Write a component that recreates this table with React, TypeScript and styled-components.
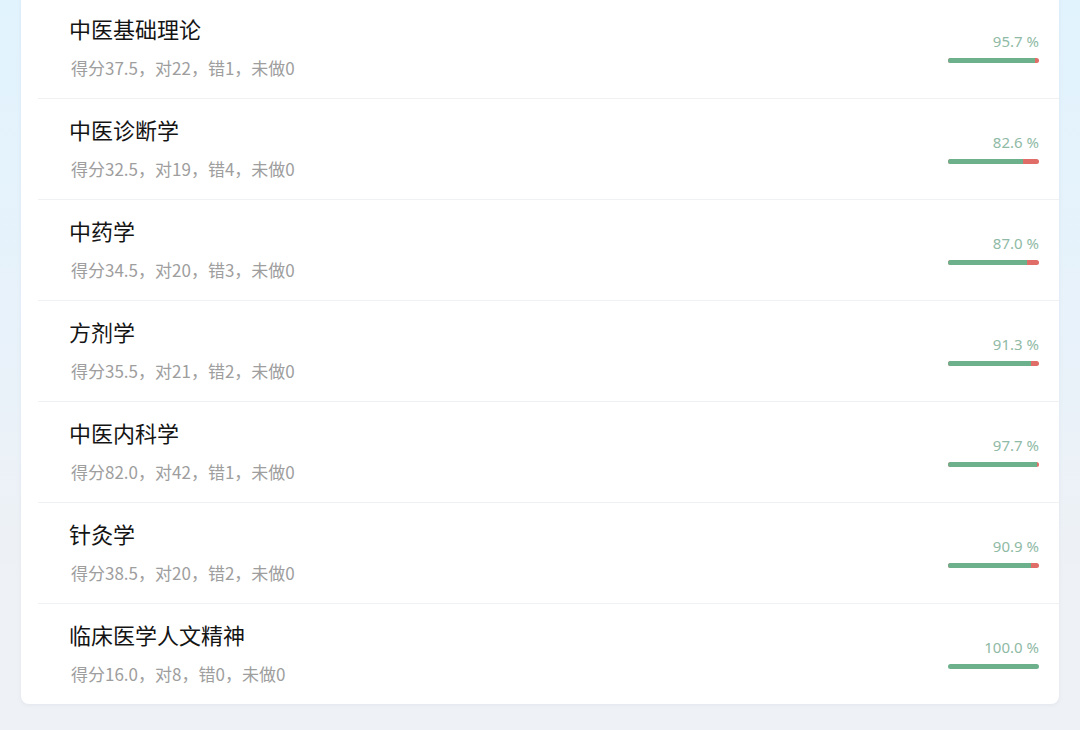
import React from "react";
import styled, { createGlobalStyle } from "styled-components";

type Subject = {
  name: string;
  score: string;
  right: number;
  wrong: number;
  undone: number;
  rate: number;
};

const subjects: Subject[] = [
  { name: "中医基础理论", score: "37.5", right: 22, wrong: 1, undone: 0, rate: 95.7 },
  { name: "中医诊断学", score: "32.5", right: 19, wrong: 4, undone: 0, rate: 82.6 },
  { name: "中药学", score: "34.5", right: 20, wrong: 3, undone: 0, rate: 87.0 },
  { name: "方剂学", score: "35.5", right: 21, wrong: 2, undone: 0, rate: 91.3 },
  { name: "中医内科学", score: "82.0", right: 42, wrong: 1, undone: 0, rate: 97.7 },
  { name: "针灸学", score: "38.5", right: 20, wrong: 2, undone: 0, rate: 90.9 },
  { name: "临床医学人文精神", score: "16.0", right: 8, wrong: 0, undone: 0, rate: 100.0 },
];

const GlobalStyle = createGlobalStyle`
  html, body {
    margin: 0;
    padding: 0;
  }
  body {
    font-family: "Noto Sans CJK SC", "Noto Sans", sans-serif;
    background: #eef1f5;
  }
`;

const Page = styled.div`
  min-height: 730px;
  overflow: hidden;
  padding: 0 21px;
  box-sizing: border-box;
  background: linear-gradient(180deg, #e1f3fd 0%, #e8f2fa 45%, #eef1f5 80%, #eef1f5 100%);
`;

const Card = styled.div`
  margin-top: -3px;
  background: #ffffff;
  border-radius: 0 0 8px 8px;
  box-shadow: 0 1px 4px rgba(160, 175, 195, 0.15);
`;

const Row = styled.div`
  display: flex;
  justify-content: space-between;
  align-items: flex-start;
  margin-left: 17px;
  padding: 0 20px 0 31px;
  border-top: 1px solid #f0f1f3;
`;

const Info = styled.div`
  display: flex;
  flex-direction: column;
  padding: 15px 0 18px;
  gap: 13px;
`;

const Title = styled.div`
  font-size: 22px;
  line-height: 30px;
  color: #141414;
`;

const Meta = styled.div`
  margin-left: 2px;
  font-size: 17px;
  line-height: 24px;
  color: #9e9e9e;
`;

const Stat = styled.div`
  display: flex;
  flex-direction: column;
  align-items: flex-end;
  margin-top: 33px;
  gap: 7px;
`;

const Percent = styled.div`
  font-family: "Noto Sans", sans-serif;
  font-size: 15px;
  line-height: 20px;
  color: #8fbaa5;
`;

const Bar = styled.div`
  display: flex;
  width: 91px;
  height: 5px;
  border-radius: 3px;
  overflow: hidden;
  background: #e06d68;
`;

const Fill = styled.div`
  height: 100%;
  background: #6db18c;
`;

export default function App() {
  return (
    <>
      <GlobalStyle />
      <Page>
        <Card>
          {subjects.map((s) => (
            <Row key={s.name}>
              <Info>
                <Title>{s.name}</Title>
                <Meta>
                  得分{s.score}，对{s.right}，错{s.wrong}，未做{s.undone}
                </Meta>
              </Info>
              <Stat>
                <Percent>{s.rate.toFixed(1)} %</Percent>
                <Bar>
                  <Fill style={{ width: `${s.rate}%` }} />
                </Bar>
              </Stat>
            </Row>
          ))}
        </Card>
      </Page>
    </>
  );
}
